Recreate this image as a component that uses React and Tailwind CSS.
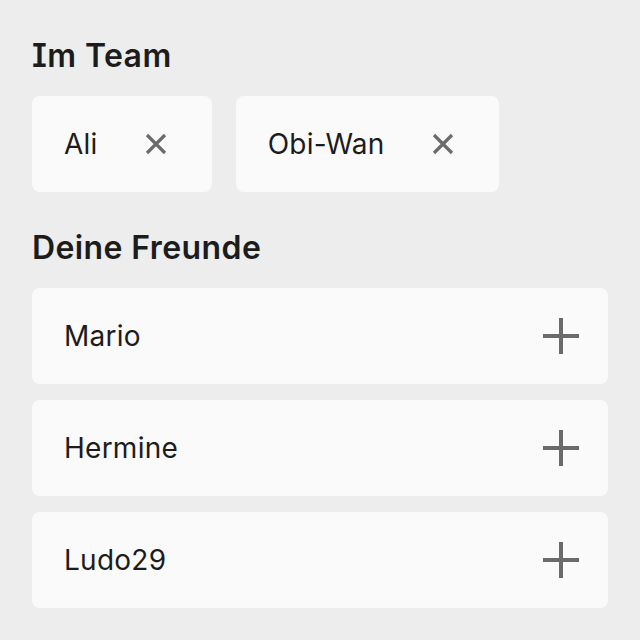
const team = ['Ali', 'Obi-Wan'];
const friends = ['Mario', 'Hermine', 'Ludo29'];

function XIcon() {
  return (
    <svg width="22" height="22" viewBox="0 0 22 22" fill="none" stroke="#6b6b6b" strokeWidth="3.2">
      <path d="M2 2 L20 20 M20 2 L2 20" />
    </svg>
  );
}

function PlusIcon() {
  return (
    <svg width="36" height="36" viewBox="0 0 36 36" fill="none" stroke="#6b6b6b" strokeWidth="4">
      <path d="M18 0 V36 M0 18 H36" />
    </svg>
  );
}

export default function App() {
  return (
    <div
      className="min-h-[640px] w-[640px] bg-[#ededed] p-8 text-[#1c1c1c]"
      style={{ fontFamily: 'Inter, "Noto Sans", sans-serif' }}
    >
      <h2 className="mb-4 h-12 text-[32px] font-semibold leading-[48px] tracking-[0.4px] [font-feature-settings:'cv08']">
        Im Team
      </h2>
      <div className="flex gap-6">
        {team.map((name) => (
          <div key={name} className="flex h-24 items-center rounded-lg bg-[#fafafa] pl-8 pr-[45px]">
            <span className="text-[28px] leading-none tracking-[0.25px]">{name}</span>
            <span className="ml-[47px] flex"><XIcon /></span>
          </div>
        ))}
      </div>
      <h2 className="mb-4 mt-8 h-12 text-[32px] font-semibold leading-[48px] tracking-[0.4px] [font-feature-settings:'cv08']">
        Deine Freunde
      </h2>
      <div className="flex flex-col gap-4">
        {friends.map((name) => (
          <div key={name} className="flex h-24 items-center justify-between rounded-lg bg-[#fafafa] pl-8 pr-[29px]">
            <span className="text-[28px] leading-none tracking-[0.25px]">{name}</span>
            <PlusIcon />
          </div>
        ))}
      </div>
    </div>
  );
}
